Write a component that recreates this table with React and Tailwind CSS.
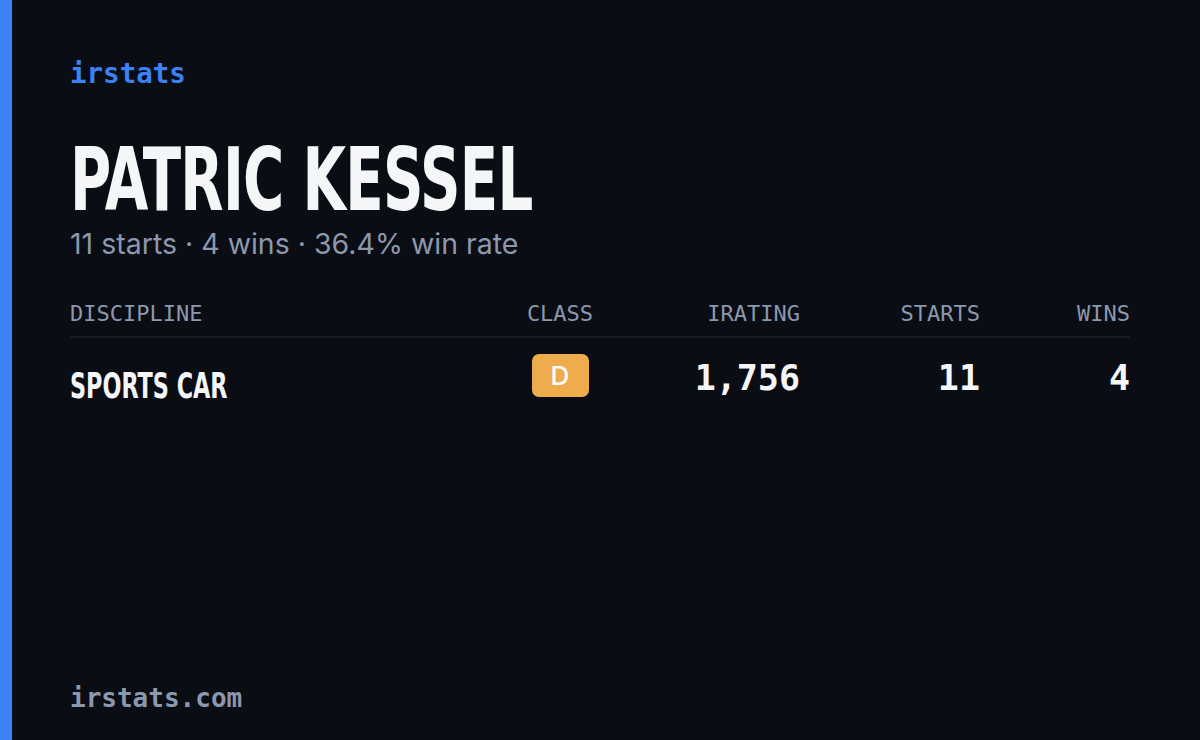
const mono = { fontFamily: '"DejaVu Sans Mono", "Liberation Mono", monospace' };
const cond = { fontFamily: '"DejaVu Sans Condensed", "DejaVu Sans", sans-serif' };

const cols = 'grid grid-cols-[425px_130px_175px_180px_150px]';

export default function App() {
  return (
    <div className="flex h-[740px] w-[1200px] bg-[#0a0d14] overflow-hidden">
      <div className="w-[12px] bg-[#3b82f6]" />
      <div className="flex flex-1 flex-col pl-[58px] pr-[70px] pt-[56px] pb-[26px]">
        <div className="text-[27.5px] leading-[34px] font-bold text-[#3b82f6]" style={mono}>irstats</div>

        <h1 className="mt-[54px] text-[88px] leading-[72px] font-bold text-[#f5f6f8] tracking-[-1px] whitespace-nowrap" style={cond}>
          <span className="inline-block origin-left scale-x-[0.71]">PATRIC KESSEL</span>
        </h1>
        <div className="mt-[10px] text-[28.5px] leading-[36px] text-[#8b98ae]" style={{ fontFamily: 'Inter, sans-serif' }}>
          11 starts · 4 wins · 36.4% win rate
        </div>

        <div className="mt-[38px]">
          <div className={`${cols} border-b-2 border-[#171b25] pb-[8px] text-[22px] leading-[28px] text-[#8b98ae]`} style={mono}>
            <div>DISCIPLINE</div>
            <div className="text-center">CLASS</div>
            <div className="text-right">IRATING</div>
            <div className="text-right">STARTS</div>
            <div className="text-right">WINS</div>
          </div>
          <div className={`${cols} items-start pt-[16px]`}>
            <div className="mt-[12px] whitespace-nowrap text-[36px] leading-[40px] font-bold text-[#f5f6f8]" style={cond}>
              <span className="inline-block origin-left scale-x-[0.69]">SPORTS CAR</span>
            </div>
            <div className="flex justify-center">
              <div
                className="flex h-[43px] w-[57px] items-center justify-center rounded-[7px] bg-[#efac4d] text-[26px] font-medium text-white"
                style={{ fontFamily: 'Inter, sans-serif' }}
              >
                D
              </div>
            </div>
            <div className="mt-[4px] text-right text-[35px] leading-[40px] font-bold text-[#f5f6f8]" style={mono}>1,756</div>
            <div className="mt-[4px] text-right text-[35px] leading-[40px] font-bold text-[#f5f6f8]" style={mono}>11</div>
            <div className="mt-[4px] text-right text-[35px] leading-[40px] font-bold text-[#f5f6f8]" style={mono}>4</div>
          </div>
        </div>

        <div className="mt-auto text-[26px] leading-[32px] font-bold text-[#8b98ae]" style={mono}>irstats.com</div>
      </div>
    </div>
  );
}
